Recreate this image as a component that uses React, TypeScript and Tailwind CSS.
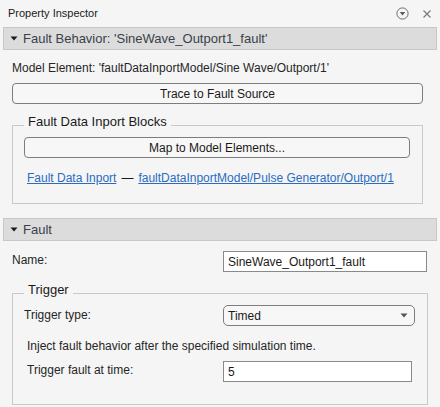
import React from "react";

function Caret() {
  return (
    <svg width="8" height="5" viewBox="0 0 8 5" className="shrink-0">
      <path d="M0.5 0.5 L7.5 0.5 L4 4.5 Z" fill="#1a1a1a" />
    </svg>
  );
}

function SectionHeader({ title }: { title: string }) {
  return (
    <div className="mx-[3px] h-[23px] bg-[#dcdcdc] border border-[#c8c8c8] flex items-center pl-[6px] gap-[5px]">
      <Caret />
      <span className="text-[13px] leading-none text-[#3a3f4a]">{title}</span>
    </div>
  );
}

function Button({ label }: { label: string }) {
  return (
    <div className="h-[21px] border border-[#7d7d7d] rounded-[4px] bg-[#f7f7f7] flex items-center justify-center text-[12px] text-[#1a1a1a]">
      {label}
    </div>
  );
}

function TextField({ value, width }: { value: string; width: string }) {
  return (
    <div className={`h-[21px] bg-white border border-[#8a8a8a] flex items-center pl-[4px] text-[12px] text-[#1a1a1a] ${width}`}>
      {value}
    </div>
  );
}

export default function App() {
  return (
    <div className="w-[440px] h-[407px] bg-[#f5f5f5] overflow-hidden font-['Liberation_Sans',Arial,sans-serif] text-[#262626]">
      {/* title bar */}
      <div className="h-[27px] flex items-center justify-between pl-[8px] pr-[8px]">
        <span className="text-[11px] text-[#1a1a1a]">Property Inspector</span>
        <div className="flex items-center gap-[13px]">
          <svg width="13" height="13" viewBox="0 0 13 13">
            <circle cx="6.5" cy="6.5" r="5.6" fill="none" stroke="#6b6b6b" strokeWidth="1" />
            <path d="M3.8 5 L9.2 5 L6.5 8.6 Z" fill="#5a5a5a" />
          </svg>
          <svg width="10" height="10" viewBox="0 0 10 10">
            <path d="M1.5 1.5 L8.5 8.5 M8.5 1.5 L1.5 8.5" stroke="#7a7a7a" strokeWidth="1.2" />
          </svg>
        </div>
      </div>

      <SectionHeader title="Fault Behavior: 'SineWave_Outport1_fault'" />

      <div className="px-[12px] pr-[17px]">
        <div className="mt-[10px] leading-[16px] text-[12px]">
          Model Element: 'faultDataInportModel/Sine Wave/Outport/1'
        </div>
        <div className="mt-[7px]">
          <Button label="Trace to Fault Source" />
        </div>

        <fieldset className="mt-[10px] border border-[#c9c9c9] pl-[11px] pr-[12px] pb-[17px]">
          <legend className="px-[4px] pb-[6px] text-[13px] leading-[16px] text-[#1a1a1a]">
            Fault Data Inport Blocks
          </legend>
          <div className="mt-[1px]">
            <Button label="Map to Model Elements..." />
          </div>
          <div className="mt-[12px] leading-[16px] text-[12px] pl-[3px] flex items-center gap-[5px]">
            <span className="text-[#2a6cc0] underline">Fault Data Inport</span>
            <span className="text-[#1a1a1a]">—</span>
            <span className="text-[#2a6cc0] underline">faultDataInportModel/Pulse Generator/Outport/1</span>
          </div>
        </fieldset>
      </div>

      <div className="mt-[14px]">
        <SectionHeader title="Fault" />
      </div>

      <div className="px-[12px]">
        <div className="mt-[10px] flex items-center">
          <span className="w-[211px] text-[12px] -mt-[4px]">Name:</span>
          <TextField value="SineWave_Outport1_fault" width="w-[204px]" />
        </div>

        <fieldset className="mt-[10px] w-[416px] border border-[#c9c9c9] pl-[11px] pb-[22px]">
          <legend className="px-[4px] pb-[6px] text-[13px] leading-[16px] text-[#1a1a1a]">
            Trigger
          </legend>
          <div className="mt-[1px] flex items-center">
            <span className="w-[199px] text-[12px] -mt-[2px]">Trigger type:</span>
            <div className="w-[192px] h-[21px] border border-[#7d7d7d] rounded-[5px] bg-[#f7f7f7] flex items-center justify-between pl-[4px] pr-[6px] text-[12px] text-[#1a1a1a]">
              <span>Timed</span>
              <svg width="8" height="5" viewBox="0 0 8 5">
                <path d="M0.5 0.5 L7.5 0.5 L4 4.5 Z" fill="#555555" />
              </svg>
            </div>
          </div>
          <div className="mt-[12px] pl-[3px] leading-[16px] text-[12px]">
            Inject fault behavior after the specified simulation time.
          </div>
          <div className="mt-[7px] flex items-center">
            <span className="w-[199px] pl-[3px] text-[12px] -mt-[4px]">Trigger fault at time:</span>
            <TextField value="5" width="w-[189px]" />
          </div>
        </fieldset>
      </div>
    </div>
  );
}
